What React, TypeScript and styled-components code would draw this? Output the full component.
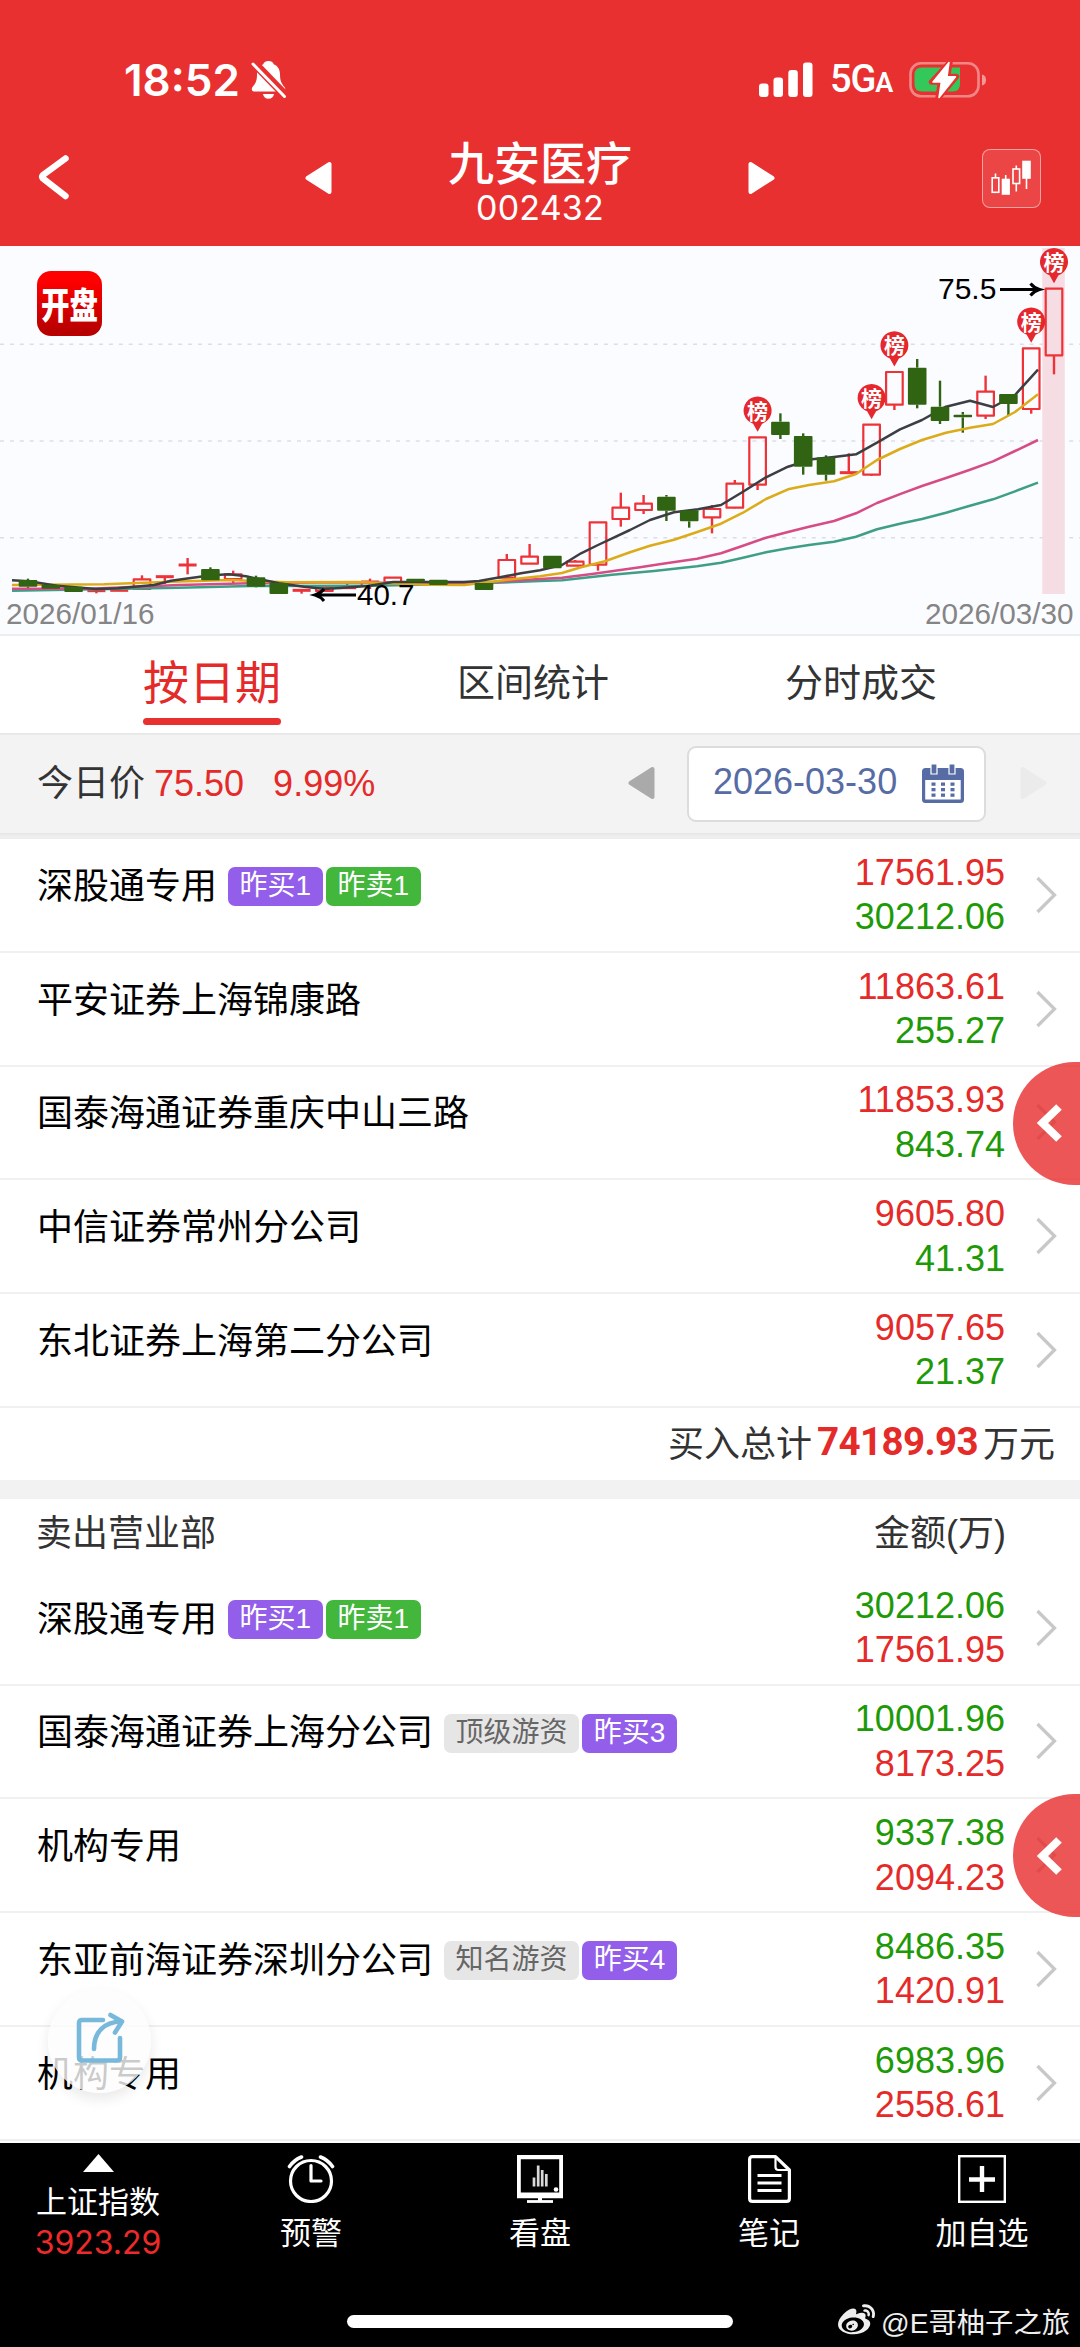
import React from 'react';
import styled, { createGlobalStyle } from 'styled-components';
import { FaWeibo } from 'react-icons/fa';

const RED = '#e93030';
const SANS = '"Liberation Sans", "Noto Sans CJK SC", sans-serif';
const UI = 'Inter, "Noto Sans CJK SC", sans-serif';

const GlobalStyle = createGlobalStyle`
  * { box-sizing: border-box; }
  html, body { margin: 0; padding: 0; background: #fff; }
  body { font-family: ${SANS}; font-weight: 400; color: #333; }
  svg { display: block; flex: none; }
`;

const Screen = styled.div`
  width: 1080px;
  height: 2347px;
  display: flex;
  flex-direction: column;
  overflow: hidden;
  background: #fff;
`;

/* ---------- header ---------- */

const Header = styled.header`
  height: 246px;
  flex: none;
  background: ${RED};
  color: #fff;
  display: flex;
  flex-direction: column;
`;

const StatusBar = styled.div`
  height: 110px;
  padding: 50px 93px 0 124px;
  display: flex;
  justify-content: space-between;
  align-items: center;
`;

const StatusGroup = styled.div<{ $gap: number }>`
  display: flex;
  align-items: center;
  gap: ${(p) => p.$gap}px;
`;

const Clock = styled.span`
  font: 600 44px/60px ${UI};
  letter-spacing: 0;
`;

const Network = styled.span`
  font: 500 38px/60px Roboto, sans-serif;
  letter-spacing: -1.2px;
  display: flex;
  align-items: baseline;
  margin-top: 1px;
  small { font-size: 27px; font-weight: 600; }
`;

const TitleBar = styled.div`
  flex: 1;
  display: grid;
  grid-template-columns: 305px 143px 184px 143px 305px;
  align-items: center;
`;

const BackSlot = styled.div`
  padding: 0 0 0 38px;
`;

const Center = styled.div<{ $end?: boolean }>`
  display: flex;
  justify-content: ${(p) => (p.$end ? 'flex-end' : 'flex-start')};
`;

const TitleText = styled.div`
  display: flex;
  flex-direction: column;
  align-items: center;
  white-space: nowrap;
`;

const StockName = styled.div`
  font: 500 46px/48px "Noto Sans CJK SC", sans-serif;
  margin-top: 8px;
`;

const StockCode = styled.div`
  font: 400 34px/42px ${UI};
  letter-spacing: 0.2px;
  margin-top: 3px;
`;

const ChartSlot = styled.div`
  display: flex;
  justify-content: flex-end;
  padding-right: 39px;
`;

const ChartButton = styled.button`
  width: 59px;
  height: 59px;
  padding: 0;
  border: 1.5px solid rgba(255, 255, 255, 0.5);
  border-radius: 8px;
  background: rgba(255, 255, 255, 0.1);
`;

/* ---------- chart ---------- */

const ChartPanel = styled.section`
  height: 390px;
  flex: none;
  position: relative;
  background: #fbfcff;
  border-bottom: 2px solid #ebedf0;
`;

const AppLogo = styled.div`
  position: absolute;
  left: 37px;
  top: 25px;
  width: 65px;
  height: 65px;
  border-radius: 14px;
  background: linear-gradient(#fe0000 15%, #b80000 92%);
  color: #fff;
  font: 900 28.5px/65px "Noto Sans CJK SC", sans-serif;
  text-align: center;
  white-space: nowrap;
  span {
    display: inline-block;
    transform: scaleY(1.28);
  }
`;

/* ---------- tabs ---------- */

const Tabs = styled.nav`
  height: 97px;
  flex: none;
  padding: 0 143px;
  display: flex;
  justify-content: space-between;
  background: #fff;
`;

const Tab = styled.div<{ $active?: boolean }>`
  display: flex;
  flex-direction: column;
  align-items: center;
  justify-content: space-between;
  padding-bottom: 8px;
  font-size: ${(p) => (p.$active ? 46 : 38)}px;
  line-height: 95px;
  color: ${(p) => (p.$active ? '#e52a2a' : '#333')};
  white-space: nowrap;
  span { height: 81px; }
  &::after {
    content: '';
    width: 100%;
    height: 7.5px;
    border-radius: 4px;
    background: ${(p) => (p.$active ? RED : 'transparent')};
  }
`;

/* ---------- date bar ---------- */

const DateBar = styled.div`
  height: 106px;
  flex: none;
  border-top: 2px solid #e9e9e9;
  border-bottom: 1px solid #ececec;
  background: linear-gradient(#f3f3f3 98px, #e6e6e6 98px, #f6f6f6 105px);
  padding: 0 33px 7px 37px;
  display: flex;
  align-items: center;
  font-size: 36px;
`;

const Price = styled.span`
  flex: 1;
  white-space: pre;
  color: #e52a2a;
  margin-top: -6px;
  b { font-weight: 400; color: #333; margin-right: 9px; }
  i { font-style: normal; margin-left: 29px; }
`;

const DateBox = styled.div`
  width: 299px;
  height: 76px;
  margin: 2px 34px 0 32px;
  padding: 0 20px 2px 24px;
  border: 2px solid #dcdcdc;
  border-radius: 9px;
  background: #fff;
  color: #576ca4;
  display: flex;
  align-items: center;
  justify-content: space-between;
  span { margin-top: -3px; }
`;

/* ---------- seat lists ---------- */

const Row = styled.div`
  height: 113.75px;
  flex: none;
  position: relative;
  display: flex;
  align-items: center;
  padding: 0 23px 0 37px;
  border-bottom: 2px solid #f0f0f0;
  background: #fff;
`;

const NameLine = styled.div`
  flex: 1;
  display: flex;
  align-items: center;
  gap: 3px;
  margin-bottom: 16px;
  white-space: nowrap;
`;

const SeatName = styled.span`
  font-size: 36px;
  line-height: 40px;
  color: #000;
  margin-right: 8px;
`;

type Tone = 'buy' | 'sell' | 'plain';
const toneBg: Record<Tone, string> = { buy: '#925eea', sell: '#43b63c', plain: '#e6e6e6' };

const Tag = styled.span<{ $tone: Tone }>`
  height: 39px;
  padding: 0 11.6px;
  border-radius: 7px;
  font-size: 28px;
  line-height: 37px;
  background: ${(p) => toneBg[p.$tone]};
  color: ${(p) => (p.$tone === 'plain' ? '#666' : '#fff')};
`;

const Amounts = styled.div`
  text-align: right;
  font-size: 36px;
  line-height: 44.5px;
  margin: 1px 30px 0 0;
`;

const Amount = styled.div<{ $up: boolean }>`
  color: ${(p) => (p.$up ? '#e52a2a' : '#1e9a08')};
`;

const Drawer = styled.button`
  position: absolute;
  right: 0;
  top: -5px;
  width: 67px;
  height: 123px;
  padding: 0 0 0 23px;
  border: 0;
  border-radius: 61.5px 0 0 61.5px;
  background: rgba(232, 44, 44, 0.8);
  z-index: 2;
`;

const TotalRow = styled.div`
  height: 72px;
  flex: none;
  display: flex;
  align-items: center;
  justify-content: flex-end;
  padding: 0 25px 5px 0;
  font-size: 36px;
`;

const TotalValue = styled.span`
  font: 700 38.5px/50px Roboto, sans-serif;
  letter-spacing: -0.6px;
  color: #e52a2a;
  margin: 2px 5px 0 5px;
`;

const Divider = styled.div`
  height: 19px;
  flex: none;
  background: #f2f2f2;
`;

const ListHead = styled.div`
  height: 73px;
  flex: none;
  display: flex;
  align-items: center;
  justify-content: space-between;
  padding: 0 74px 2px 36px;
  font-size: 36px;
  line-height: 50px;
`;

const ShareButton = styled.button`
  position: absolute;
  left: 48px;
  top: -38px;
  width: 103px;
  height: 104px;
  padding: 0 0 5px 28px;
  border: 0;
  border-radius: 50%;
  background: rgba(252, 252, 252, 0.8);
  box-shadow: 0 6px 14px rgba(0, 0, 0, 0.09);
  z-index: 2;
`;

/* ---------- bottom ---------- */

const Bottom = styled.footer`
  flex: 1;
  margin-top: 2px;
  background: #000;
  color: #fff;
  display: flex;
  flex-direction: column;
`;

const NavBar = styled.nav`
  height: 152px;
  display: grid;
  grid-template-columns: 196px 230px 228px 230px 196px;
  font-size: 31px;
`;

const NavItem = styled.div<{ $pad: number }>`
  display: flex;
  flex-direction: column;
  align-items: center;
  padding-top: ${(p) => p.$pad}px;
  line-height: 40px;
  white-space: nowrap;
`;

const NavLabel = styled.span`
  margin-top: 11px;
  font-size: 31px;
`;

const IndexValue = styled.span`
  font: 400 32px/40px ${UI};
  color: #ee2a2a;
`;

const HomeZone = styled.div`
  flex: 1;
  display: grid;
  grid-template-columns: 1fr 386px 1fr;
  align-items: center;
`;

const HomeBar = styled.div`
  grid-column: 2;
  height: 13px;
  margin-top: 2px;
  border-radius: 7px;
  background: #fff;
`;

const Watermark = styled.div`
  display: flex;
  align-items: center;
  justify-content: flex-end;
  gap: 6px;
  padding-right: 10px;
  font-size: 28.3px;
  color: #eee;
  white-space: nowrap;
`;

/* ---------- chart data: [rising, body top, body bottom, high, low, listed] ---------- */

type Candle = [boolean, number, number, number, number, boolean?];

const CANDLES: Candle[] = [
  [false, 1020, 1040, 1016, 1045], [false, 1034, 1046, 1034, 1046], [false, 1040, 1056, 1040, 1056],
  [true, 1052, 1052, 1045, 1060], [true, 1051, 1051, 1051, 1051], [true, 1018, 1047, 1006, 1047],
  [true, 1010, 1010, 1010, 1032], [true, 975, 975, 954, 1003], [false, 987, 1021, 982, 1021],
  [true, 1003, 1017, 992, 1030], [false, 1012, 1040, 1007, 1042], [false, 1029, 1062, 1029, 1062],
  [true, 1051, 1051, 1051, 1061], [true, 1043, 1053, 1043, 1053], [true, 1043, 1043, 1032, 1043],
  [true, 1025, 1038, 1016, 1047], [true, 1013, 1027, 1013, 1027], [false, 1016, 1025, 1016, 1025],
  [false, 1019, 1035, 1019, 1035], [true, 1031, 1031, 1024, 1031], [false, 1029, 1050, 1029, 1050],
  [true, 960, 1013, 942, 1013], [true, 950, 971, 912, 971], [false, 947, 985, 947, 985],
  [true, 965, 977, 960, 977], [true, 847, 974, 847, 992], [true, 803, 837, 758, 860],
  [true, 791, 810, 765, 822], [false, 770, 812, 765, 843], [false, 811, 844, 811, 863],
  [true, 807, 832, 795, 880], [true, 731, 803, 720, 805], [true, 592, 734, 592, 750, true],
  [false, 545, 585, 520, 597], [false, 588, 680, 580, 704], [false, 652, 704, 646, 722],
  [true, 698, 698, 640, 698], [true, 554, 704, 554, 708, true], [true, 396, 494, 396, 510, true],
  [false, 383, 494, 357, 505], [false, 500, 543, 422, 552], [false, 524, 532, 516, 578],
  [true, 455, 527, 407, 537], [false, 462, 492, 462, 525], [true, 325, 507, 325, 521, true],
  [true, 146, 346, 146, 403, true],
];

const AVERAGES: { color: string; points: number[][] }[] = [
  {
    color: '#3f9f86',
    points: [[12, 1052], [96, 1048], [179, 1043], [250, 1038], [375, 1037], [482, 1030], [540, 1023], [562, 1021], [612, 1004], [654, 993], [697, 979], [721, 968], [743, 953], [766, 937], [788, 925], [809, 915], [834, 905], [856, 890], [877, 868], [902, 850], [922, 837], [946, 818], [970, 797], [993, 778], [1015, 754], [1038, 728]],
  },
  {
    color: '#d64c86',
    points: [[12, 1046], [89, 1046], [179, 1035], [250, 1030], [339, 1027], [411, 1030], [482, 1028], [540, 1017], [562, 1013], [592, 1002], [640, 982], [661, 972], [697, 956], [721, 940], [743, 917], [766, 893], [788, 876], [809, 860], [834, 843], [856, 820], [877, 789], [902, 760], [922, 738], [946, 714], [970, 689], [993, 664], [1015, 633], [1038, 600]],
  },
  {
    color: '#dcab18',
    points: [[12, 1035], [104, 1033], [171, 1025], [229, 1020], [286, 1027], [357, 1026], [429, 1034], [464, 1035], [500, 1022], [540, 1009], [562, 999], [581, 982], [605, 964], [630, 937], [650, 917], [674, 899], [698, 875], [721, 851], [743, 818], [766, 777], [788, 748], [809, 735], [834, 724], [856, 702], [877, 660], [900, 627], [922, 600], [946, 578], [970, 563], [993, 552], [1015, 516], [1038, 463]],
  },
  {
    color: '#3c3e42',
    points: [[12, 1021], [29, 1024], [57, 1037], [96, 1047], [118, 1045], [154, 1035], [171, 1022], [211, 1006], [229, 1003], [246, 1009], [279, 1030], [304, 1040], [325, 1047], [368, 1038], [393, 1026], [464, 1026], [479, 1023], [500, 1012], [521, 1000], [540, 991], [562, 975], [581, 940], [598, 915], [630, 870], [650, 840], [674, 817], [698, 808], [721, 795], [743, 755], [766, 712], [788, 680], [812, 658], [834, 651], [856, 643], [877, 608], [900, 568], [922, 540], [946, 500], [970, 482], [993, 501], [1015, 465], [1038, 389]],
  },
];

const STEP = 22.8;
const chartY = (v: number) => v / 3 - 6;

function KLine() {
  return (
    <svg width="1080" height="388" viewBox="0 0 1080 388" fontFamily={SANS}>
      {[98.3, 195, 291.7].map((y) => (
        <line key={y} x1="0" x2="1080" y1={y} y2={y} stroke="#dcdee6" strokeWidth="1.5" strokeDasharray="4 5.9" />
      ))}
      <rect x="1042.3" y="2" width="22.5" height="346" fill="#f6dde3" />
      {CANDLES.map(([up, top, bottom, high, low], i) => {
        const x = 28 + i * STEP;
        const color = up ? '#ee3338' : '#306413';
        const flat = top === bottom;
        return (
          <g key={i} stroke={color} strokeWidth="2.4">
            {high < top && <line x1={x} x2={x} y1={chartY(high)} y2={chartY(top)} />}
            {low > bottom && <line x1={x} x2={x} y1={chartY(bottom)} y2={chartY(low)} />}
            {flat ? (
              <line x1={x - 9} x2={x + 9} y1={chartY(top)} y2={chartY(top)} strokeWidth="3" />
            ) : up ? (
              <rect x={x - 8.3} y={chartY(top)} width="16.6" height={(bottom - top) / 3} strokeWidth="2.2" strokeLinejoin="round" fill="none" />
            ) : null}
          </g>
        );
      })}
      {AVERAGES.map((a) => (
        <polyline key={a.color} fill="none" stroke={a.color} strokeWidth="2.5" strokeLinejoin="round"
          points={a.points.map(([x, v]) => x + ',' + chartY(v).toFixed(1)).join(' ')} />
      ))}
      {CANDLES.map(([up, top, bottom], i) =>
        up ? null : (
          <rect key={i} x={28 + i * STEP - 9.3} y={chartY(top)} width="18.6" height={(bottom - top) / 3} rx="1" fill="#306413" />
        ),
      )}
      {CANDLES.map(([, top, , , , listed], i) =>
        listed ? (
          <g key={i} transform={`translate(${28 + i * STEP} ${chartY(top) - 26})`}>
            <path d="M0 20.5 L-4.5 12.5 A14 14 0 1 1 4.5 12.5 Z" fill="#e5282d" />
            <text x="0" y="7.4" fontSize="21" fontWeight="700" fill="#fff" textAnchor="middle" fontFamily="Noto Sans CJK SC">榜</text>
          </g>
        ) : null,
      )}
      <g fill="none" stroke="#000" strokeWidth="3">
        <path d="M1000 43.5 H1038 M1030.5 37.5 Q1034 42 1039.5 43.5 Q1034 45 1030.5 49.5" />
        <path d="M356 349 H316 M324 343 Q320.500 347.500 315 349 Q320.500 350.500 324 355" />
      </g>
      <text x="938" y="53" fontSize="30" fill="#000">75.5</text>
      <text x="357" y="359" fontSize="29.500" fill="#000">40.7</text>
      <text x="6" y="378" fontSize="29.700" fill="#858585">2026/01/16</text>
      <text x="925" y="378" fontSize="29.700" fill="#858585">2026/03/30</text>
    </svg>
  );
}

/* ---------- icons ---------- */

const BellOff = () => (
  <svg width="36" height="40" viewBox="0 0 36 40" fill="#fff">
    <path d="M17.500 1c3.200 0 4.800 1.500 5.200 3.200 4.200 1.600 6.300 5.500 6.300 10.300 0 7 2 9.500 4.500 12.500 1.200 1.500 1 4.500-1.500 4.500H3c-2.500 0-2.700-3-1.500-4.500C4 24 6 21.500 6 14.500c0-4.800 2.100-8.700 6.300-10.300C12.700 2.500 14.300 1 17.500 1z" />
    <path d="M12 34h11c-.5 3-2.500 4.800-5.500 4.800S12.500 37 12 34z" />
    <path d="M4 1.500 L35 33.500" stroke={RED} strokeWidth="5" />
    <path d="M2 4 L33.500 36.500" stroke={RED} strokeWidth="6" />
    <path d="M2 4 L33.500 36.500" stroke="#fff" strokeWidth="3" strokeLinecap="round" />
  </svg>
);

const Signal = () => (
  <svg width="54" height="36" viewBox="0 0 54 36" fill="#fff">
    <rect x="0" y="21.500" width="9.500" height="13.500" rx="3" />
    <rect x="14.500" y="15.500" width="9.500" height="19.500" rx="3" />
    <rect x="29.300" y="8" width="9.500" height="27" rx="3" />
    <rect x="44" y="0.500" width="9.500" height="34.500" rx="3" />
  </svg>
);

const Battery = () => (
  <svg width="78" height="40" viewBox="0 0 78 40">
    <rect x="1.500" y="3.300" width="68" height="33" rx="10.500" fill="none" stroke="#fff" strokeOpacity=".42" strokeWidth="2.600" />
    <path d="M73 14.500c3 .8 4 3 4 5.500s-1 4.700-4 5.500z" fill="#fff" fillOpacity=".5" />
    <path d="M12 7.500h39V24q0 7.500-7.500 7.500H13q-7.500 0-7.500-7.500v-9q0-7.500 7-7.500z" fill="#34c759" />
    <path d="M41 2 L22.500 22 H31.500 L29 38.500 L47.500 16.500 H38.500 Z" fill="#fff" stroke={RED} strokeWidth="5.500" strokeLinejoin="round" />
    <path d="M40 2.500 L24 22 H32.300 L30 37.500 L46.500 16.800 H38 Z" fill="#fff" stroke="#fff" strokeWidth="1.500" strokeLinejoin="round" />
  </svg>
);

const Back = () => (
  <svg width="32" height="48" viewBox="0 0 32 48">
    <path d="M27.500 4.500 L5 21 Q3.500 22.500 5 24.500 L27.500 42" fill="none" stroke="#fff" strokeWidth="6.500" strokeLinecap="round" strokeLinejoin="round" />
  </svg>
);

const Triangle = ({ color, flip }: { color: string; flip?: boolean }) => (
  <svg width="27" height="34" viewBox="0 0 27 34">
    <path d="M24.500 3 V31 L2.500 17 Z" fill={color} stroke={color} strokeWidth="4" strokeLinejoin="round"
      transform={flip ? 'matrix(-1 0 0 1 27 0)' : undefined} />
  </svg>
);

const Candles = () => (
  <svg width="56" height="56" viewBox="0 0 56 56" fill="none" stroke="#fff" strokeWidth="1.600">
    <rect x="9.200" y="27.800" width="6.600" height="14.500" />
    <path d="M12.500 23.500v4M22.700 25v4M33.300 15.500v3.500M33.300 34v7.500M43.500 28v11" />
    <rect x="19.500" y="29.500" width="6.600" height="14.500" fill="#fff" />
    <rect x="30" y="19" width="6.600" height="14.500" />
    <rect x="40" y="11.500" width="7" height="16.500" fill="#fff" />
  </svg>
);

const Calendar = () => (
  <svg width="42" height="39" viewBox="0 0 42 39">
    <rect x="0" y="4" width="42" height="35" rx="3.500" fill="#576ca4" />
    <rect x="3.200" y="16" width="35.500" height="19.500" fill="#fff" />
    <path d="M9 0h6v10H9zM27 0h6v10h-6z" fill="#576ca4" stroke="#fff" strokeWidth="1.200" />
    {[18.500, 24, 29.500].map((y) => [9.500, 19, 28.500].map((x) => <rect key={x + '-' + y} x={x} y={y} width="4" height="3.300" fill="#576ca4" />))}
  </svg>
);

const Chevron = () => (
  <svg width="22" height="38" viewBox="0 0 22 38">
    <path d="M2.500 2 L19.500 19 L2.500 36" fill="none" stroke="#c8c8c8" strokeWidth="3.300" />
  </svg>
);

const DrawerArrow = () => (
  <svg width="27" height="40" viewBox="0 0 27 40">
    <path d="M23 4 L6.500 20 L23 36" fill="none" stroke="#fff" strokeWidth="8" />
  </svg>
);

const Share = () => (
  <svg width="50" height="52" viewBox="0 0 50 52" fill="none" stroke="#78b9db" strokeWidth="4.600" strokeLinecap="round" strokeLinejoin="round">
    <path d="M27 8H6Q3 8 3 11V45Q3 48.500 6 48.500H41Q44 48.500 44 45V26" />
    <path d="M18 37C18 20 28 10 45 9.500" />
    <path d="M34.500 3L46 9.500L39 20.500" />
  </svg>
);

const Up = () => (
  <svg width="31" height="18" viewBox="0 0 31 18"><path d="M15.500 0 L31 18 H0 Z" fill="#fff" /></svg>
);

const Alarm = () => (
  <svg width="48" height="48" viewBox="0 0 48 48" fill="none" stroke="#fff" strokeWidth="3.200" strokeLinecap="round" strokeLinejoin="round">
    <ellipse cx="24" cy="26" rx="20.500" ry="20.500" />
    <path d="M24 10.500V26H34" />
    <path d="M2.500 11.500Q7 5 14.500 2M45.500 11.500Q41 5 33.500 2" strokeWidth="3.600" />
  </svg>
);

const Monitor = () => (
  <svg width="46" height="48" viewBox="0 0 46 48" fill="none" stroke="#fff">
    <path d="M0 0H46V43.300H0Z M3.800 4.200V37.500H42.200V4.200Z" fill="#fff" fillRule="evenodd" stroke="none" />
    <path d="M23 42V46.500" strokeWidth="4" />
    <path d="M10 46.500H36" strokeWidth="2.800" />
    <path d="M17 22.500V31.500M21.200 10.500V31.500M25.200 15V31.500M29.300 19V31.500" strokeWidth="2.700" stroke="#d8d8d8" />
    <circle cx="39" cy="34.500" r="2.300" fill="#fff" stroke="none" />
  </svg>
);

const Note = () => (
  <svg width="43" height="48" viewBox="0 0 43 48" fill="none" stroke="#fff" strokeWidth="3.200" strokeLinejoin="round">
    <path d="M27.500 1.600H4.500Q1.600 1.600 1.600 4.500V43.500Q1.600 46.400 4.500 46.400H38.500Q41.400 46.400 41.400 43.500V15Z" />
    <path d="M27.500 2V12Q27.500 15 30.500 15H41" strokeWidth="2.200" />
    <path d="M9.500 20.500H33.500M9.500 28H33.500M9.500 35.500H33.500" strokeWidth="2.800" />
  </svg>
);

const Plus = () => (
  <svg width="48" height="48" viewBox="0 0 48 48" fill="none" stroke="#fff">
    <rect x="1.200" y="1.200" width="45.600" height="45.600" strokeWidth="2.400" />
    <path d="M24 11V37M11 24.500H37" strokeWidth="4.400" />
  </svg>
);

/* ---------- lists ---------- */

type Seat = { name: string; tags?: [Tone, string][]; a: string; b: string; drawer?: boolean };

const BUY: Seat[] = [
  { name: '深股通专用', tags: [['buy', '昨买1'], ['sell', '昨卖1']], a: '17561.95', b: '30212.06' },
  { name: '平安证券上海锦康路', a: '11863.61', b: '255.27' },
  { name: '国泰海通证券重庆中山三路', a: '11853.93', b: '843.74', drawer: true },
  { name: '中信证券常州分公司', a: '9605.80', b: '41.31' },
  { name: '东北证券上海第二分公司', a: '9057.65', b: '21.37' },
];

const SELL: Seat[] = [
  { name: '深股通专用', tags: [['buy', '昨买1'], ['sell', '昨卖1']], a: '30212.06', b: '17561.95' },
  { name: '国泰海通证券上海分公司', tags: [['plain', '顶级游资'], ['buy', '昨买3']], a: '10001.96', b: '8173.25' },
  { name: '机构专用', a: '9337.38', b: '2094.23', drawer: true },
  { name: '东亚前海证券深圳分公司', tags: [['plain', '知名游资'], ['buy', '昨买4']], a: '8486.35', b: '1420.91' },
  { name: '机构专用', a: '6983.96', b: '2558.61' },
];

function SeatRow({ seat, buying, share }: { seat: Seat; buying: boolean; share?: boolean }) {
  return (
    <Row>
      <NameLine>
        <SeatName>{seat.name}</SeatName>
        {seat.tags?.map(([tone, label]) => <Tag key={label} $tone={tone}>{label}</Tag>)}
      </NameLine>
      <Amounts>
        <Amount $up={buying}>{seat.a}</Amount>
        <Amount $up={!buying}>{seat.b}</Amount>
      </Amounts>
      <Chevron />
      {seat.drawer && <Drawer><DrawerArrow /></Drawer>}
      {share && <ShareButton><Share /></ShareButton>}
    </Row>
  );
}

const NAV = [
  { label: '预警', icon: <Alarm /> },
  { label: '看盘', icon: <Monitor /> },
  { label: '笔记', icon: <Note /> },
  { label: '加自选', icon: <Plus /> },
];

export default function App() {
  return (
    <>
      <GlobalStyle />
      <Screen>
        <Header>
          <StatusBar>
            <StatusGroup $gap={11}>
              <Clock>18:52</Clock>
              <BellOff />
            </StatusGroup>
            <StatusGroup $gap={17}>
              <Signal />
              <Network>5G<small>A</small></Network>
              <Battery />
            </StatusGroup>
          </StatusBar>
          <TitleBar>
            <BackSlot><Back /></BackSlot>
            <Center><Triangle color="#fff" /></Center>
            <TitleText>
              <StockName>九安医疗</StockName>
              <StockCode>002432</StockCode>
            </TitleText>
            <Center $end><Triangle color="#fff" flip /></Center>
            <ChartSlot><ChartButton><Candles /></ChartButton></ChartSlot>
          </TitleBar>
        </Header>

        <ChartPanel>
          <KLine />
          <AppLogo><span>开盘</span></AppLogo>
        </ChartPanel>

        <Tabs>
          <Tab $active><span>按日期</span></Tab>
          <Tab><span>区间统计</span></Tab>
          <Tab><span>分时成交</span></Tab>
        </Tabs>

        <DateBar>
          <Price><b>今日价</b>75.50<i>9.99%</i></Price>
          <Triangle color="#aaa" />
          <DateBox><span>2026-03-30</span><Calendar /></DateBox>
          <Triangle color="#ebebeb" flip />
        </DateBar>

        {BUY.map((s) => <SeatRow key={s.a} seat={s} buying />)}
        <TotalRow>买入总计<TotalValue>74189.93</TotalValue>万元</TotalRow>
        <Divider />
        <ListHead><span>卖出营业部</span><span>金额(万)</span></ListHead>
        {SELL.map((s, i) => <SeatRow key={s.a} seat={s} buying={false} share={i === 4} />)}

        <Bottom>
          <NavBar>
            <NavItem $pad={11}>
              <Up />
              <NavLabel>上证指数</NavLabel>
              <IndexValue>3923.29</IndexValue>
            </NavItem>
            {NAV.map((n) => (
              <NavItem key={n.label} $pad={12}>
                {n.icon}
                <NavLabel>{n.label}</NavLabel>
              </NavItem>
            ))}
          </NavBar>
          <HomeZone>
            <HomeBar />
            <Watermark><FaWeibo size={37} />@E哥柚子之旅</Watermark>
          </HomeZone>
        </Bottom>
      </Screen>
    </>
  );
}
